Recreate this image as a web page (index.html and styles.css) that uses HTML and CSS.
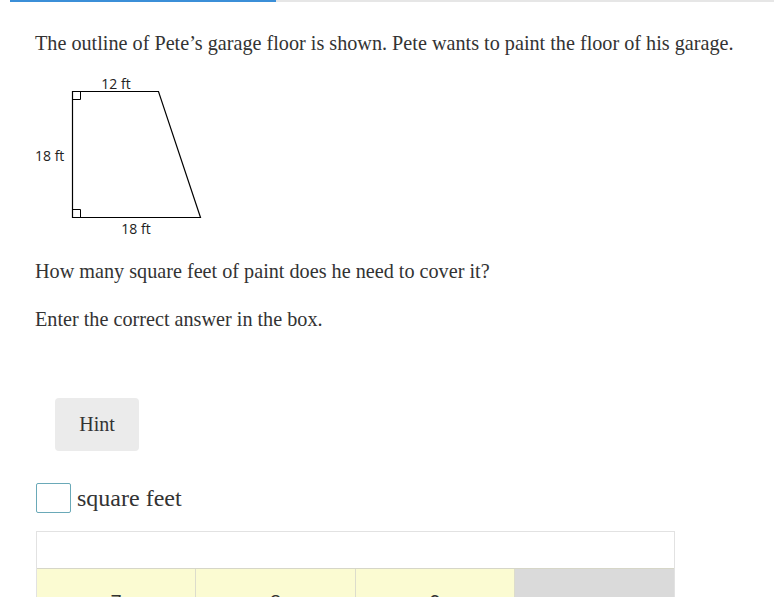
FILE: index.html
```html
<!DOCTYPE html>
<html>
<head>
<meta charset="utf-8">
<link rel="stylesheet" href="styles.css">
</head>
<body>
<div class="page">
  <div class="progress"><div class="progress-fill"></div></div>
  <div class="content">
    <p class="text intro">The outline of Pete’s garage floor is shown. Pete wants to paint the floor of his garage.</p>
    <svg class="figure" width="172" height="166" viewBox="0 0 172 166">
      <polygon points="37.5,18.5 123.5,18.5 165.5,144.5 37.5,144.5" fill="none" stroke="#000" stroke-width="1.2"/>
      <polyline points="37.5,26.5 45.5,26.5 45.5,18.5" fill="none" stroke="#000" stroke-width="1"/>
      <polyline points="37.5,136.5 45.5,136.5 45.5,144.5" fill="none" stroke="#000" stroke-width="1"/>
      <text x="81" y="16" text-anchor="middle" class="lbl">12 ft</text>
      <text x="0" y="88" class="lbl">18 ft</text>
      <text x="101" y="161" text-anchor="middle" class="lbl">18 ft</text>
    </svg>
    <p class="text q1">How many square feet of paint does he need to cover it?</p>
    <p class="text q2">Enter the correct answer in the box.</p>
    <div class="hint-wrap"><button class="hint">Hint</button></div>
    <div class="answer">
      <span class="box"></span>
      <span class="unit">square feet</span>
    </div>
    <div class="keypad">
      <div class="display"></div>
      <div class="keys">
        <div class="key num">7</div>
        <div class="key num">8</div>
        <div class="key num">9</div>
        <div class="key op">÷</div>
      </div>
    </div>
  </div>
</div>
</body>
</html>
```
FILE: styles.css
```css
html, body {
  margin: 0;
  padding: 0;
  background: #fff;
}
.page {
  height: 597px;
  overflow: hidden;
  font-family: "Liberation Serif", "Times New Roman", serif;
  color: #333;
}
.progress {
  margin-left: 10px;
  height: 2px;
  background: #e6e6e6;
}
.progress-fill {
  width: 266px;
  height: 2px;
  background: #3b8fd8;
}
.content {
  padding: 0 35px;
}
.text {
  font-size: 20.2px;
  line-height: 28px;
  margin: 0;
}
.intro {
  margin-top: 27px;
}
.figure {
  display: block;
  margin-top: 16px;
}
.lbl {
  font-family: "Open Sans", sans-serif;
  font-size: 14px;
  fill: #222;
}
.q1 {
  margin-top: 18px;
}
.q2 {
  margin-top: 20px;
}
.hint-wrap {
  margin-top: 65px;
  padding-left: 20px;
}
.hint {
  display: block;
  width: 84px;
  height: 53px;
  border: none;
  border-radius: 4px;
  background: #ebebeb;
  font-family: "Liberation Serif", serif;
  font-size: 20px;
  color: #333;
  padding: 0;
}
.answer {
  display: flex;
  align-items: center;
  gap: 6px;
  margin-top: 32px;
  padding-left: 1px;
}
.box {
  width: 33px;
  height: 28px;
  border: 1px solid #6aa9b8;
  border-radius: 2px;
}
.unit {
  font-size: 24px;
  color: #333;
}
.keypad {
  margin-top: 18px;
  margin-left: 1px;
  width: 637px;
  border: 1px solid #e2e2e2;
}
.display {
  height: 36px;
  background: #fff;
  border-bottom: 1px solid #d6d6c8;
}
.keys {
  display: grid;
  grid-template-columns: 159px 160px 159px 159px;
}
.key {
  height: 66px;
  display: flex;
  align-items: center;
  justify-content: center;
  font-family: "Liberation Sans", sans-serif;
  font-size: 20px;
  color: #333;
}
.num {
  background: #fbfbd2;
  border-right: 1px solid #dcdccc;
}
.op {
  background: #dadada;
}
```
